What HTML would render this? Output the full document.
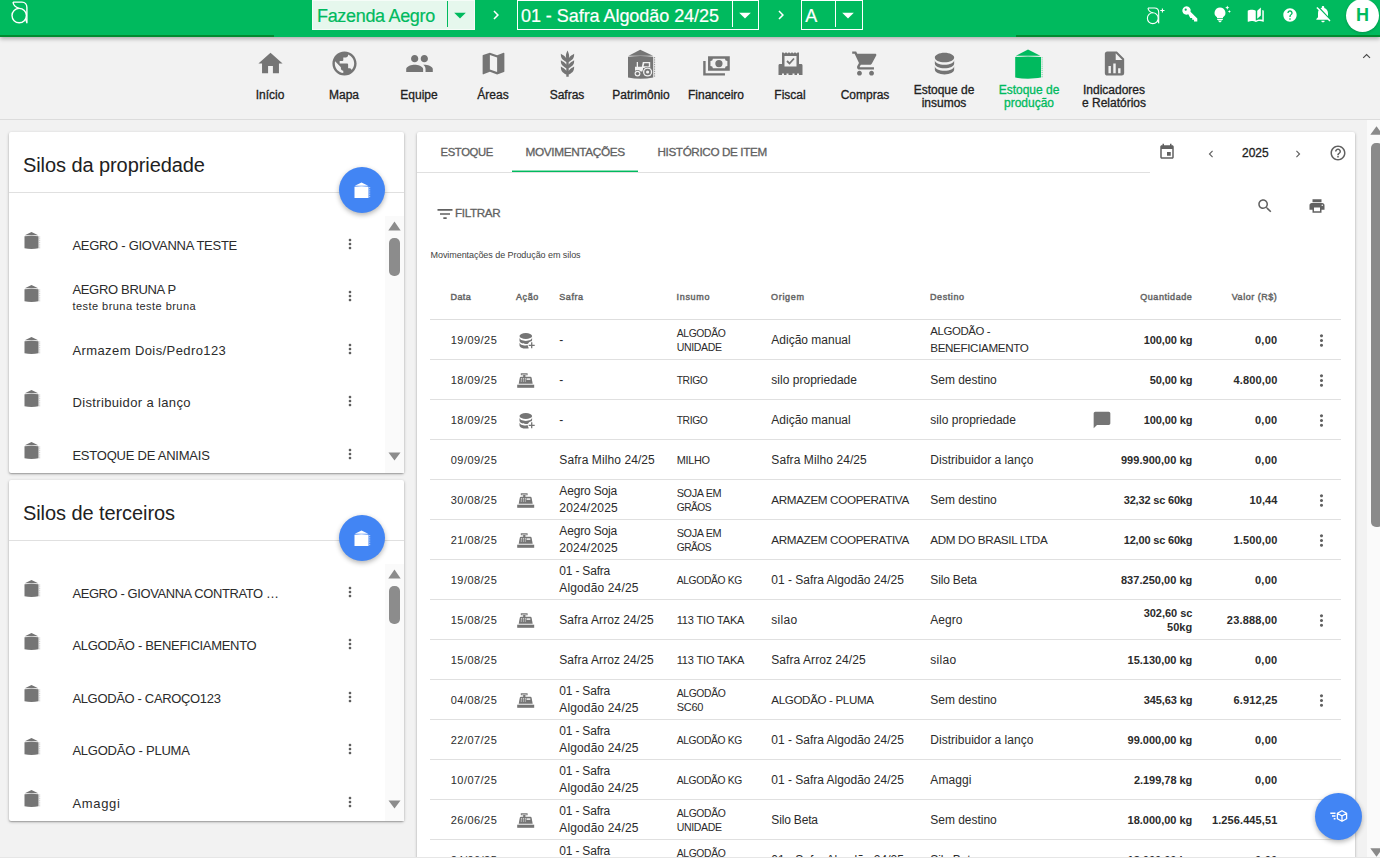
<!DOCTYPE html>
<html lang="pt-BR">
<head>
<meta charset="utf-8">
<title>Aegro - Estoque de produção</title>
<style>
*{box-sizing:border-box}
html,body{margin:0;padding:0}
body{width:1380px;height:858px;overflow:hidden;background:#f2f2f2;font-family:"Liberation Sans",sans-serif;color:#2b2b2b;position:relative}
.ic{position:absolute;display:block;overflow:visible}
.abs{position:absolute}
.t{position:absolute;white-space:nowrap;line-height:1}
.med{-webkit-text-stroke:0.3px currentColor}
.med2{-webkit-text-stroke:0.45px currentColor}
#top{position:absolute;left:0;top:0;width:1380px;height:37px;background:#00ba5e;box-shadow:0 2px 4px rgba(0,0,0,.28);z-index:5}
#prog1,#prog2{position:absolute;top:35px;height:2px;background:#008b30}
#nav{position:absolute;left:0;top:37px;width:1380px;height:83px;background:#f2f2f2;border-bottom:1px solid #dcdcdc}
.nl{position:absolute;font-size:12px;line-height:13px;text-align:center;color:#212121;white-space:nowrap;transform:translateX(-50%);-webkit-text-stroke:0.3px currentColor}
.card{position:absolute;background:#fff;border-radius:2px;box-shadow:0 1px 3px rgba(0,0,0,.3),0 1px 1px rgba(0,0,0,.14)}
.fab{position:absolute;width:46px;height:46px;border-radius:50%;background:#4285f4;box-shadow:0 2px 5px rgba(0,0,0,.3)}
.thumb{position:absolute;background:#8c8c8c;border-radius:5px}
</style>
</head>
<body>
<div id="nav">
<svg class="ic" style="left:255.5px;top:12px;width:29px;height:29px" viewBox="0 0 24 24" ><path fill="#757575" d="M10 20v-6h4v6h5v-8h3L12 3 2 12h3v8z"/></svg>
<div class="nl" style="left:270px;top:52px;color:#212121">Início</div>
<svg class="ic" style="left:329.5px;top:12px;width:29px;height:29px" viewBox="0 0 24 24" ><path fill="#757575" d="M12 2C6.48 2 2 6.48 2 12s4.48 10 10 10 10-4.48 10-10S17.52 2 12 2zm-1 17.93c-3.95-.49-7-3.85-7-7.93 0-.62.08-1.21.21-1.79L9 15v1c0 1.1.9 2 2 2v1.93zm6.9-2.54c-.26-.81-1-1.39-1.9-1.39h-1v-3c0-.55-.45-1-1-1H8v-2h2c.55 0 1-.45 1-1V7h2c1.1 0 2-.9 2-2v-.41c2.93 1.19 5 4.06 5 7.41 0 2.08-.8 3.97-2.1 5.39z"/></svg>
<div class="nl" style="left:344px;top:52px;color:#212121">Mapa</div>
<svg class="ic" style="left:404.5px;top:12px;width:29px;height:29px" viewBox="0 0 24 24" ><path fill="#757575" d="M16 11c1.66 0 2.99-1.34 2.99-3S17.66 5 16 5c-1.66 0-3 1.34-3 3s1.34 3 3 3zm-8 0c1.66 0 2.99-1.34 2.99-3S9.66 5 8 5C6.34 5 5 6.34 5 8s1.34 3 3 3zm0 2c-2.33 0-7 1.17-7 3.5V19h14v-2.5c0-2.33-4.67-3.5-7-3.5zm8 0c-.29 0-.62.02-.97.05 1.16.84 1.97 1.97 1.97 3.45V19h6v-2.5c0-2.33-4.67-3.5-7-3.5z"/></svg>
<div class="nl" style="left:419px;top:52px;color:#212121">Equipe</div>
<svg class="ic" style="left:478.5px;top:12px;width:29px;height:29px" viewBox="0 0 24 24" ><path fill="#757575" d="M20.5 3l-.16.03L15 5.1 9 3 3.36 4.9c-.21.07-.36.25-.36.48V20.5c0 .28.22.5.5.5l.16-.03L9 18.9l6 2.1 5.64-1.9c.21-.07.36-.25.36-.48V3.5c0-.28-.22-.5-.5-.5zM15 19l-6-2.11V5l6 2.11V19z"/></svg>
<div class="nl" style="left:493px;top:52px;color:#212121">Áreas</div>
<svg class="ic" style="left:552.5px;top:12px;width:29px;height:29px" viewBox="0 0 24 24" ><path fill="#757575" d="M7.33,18.33C6.5,17.17 6.5,15.83 6.5,14.5C8.17,15.5 9.83,16.5 10.67,17.67L11,18.23V15.95C9.5,15.05 8.08,14.13 7.33,13.08C6.5,11.92 6.5,10.58 6.5,9.25C8.17,10.25 9.83,11.25 10.67,12.42L11,13V10.7C9.5,9.8 8.08,8.88 7.33,7.83C6.5,6.67 6.5,5.33 6.5,4C8.17,5 9.83,6 10.67,7.17C10.77,7.31 10.86,7.46 10.94,7.62C10.77,7 10.66,6.42 10.65,5.82C10.64,4.31 11.3,2.76 11.96,1.21C12.65,2.69 13.34,4.18 13.35,5.69C13.36,6.32 13.25,6.96 13.07,7.59C13.15,7.45 13.23,7.31 13.33,7.17C14.17,6 15.83,5 17.5,4C17.5,5.33 17.5,6.67 16.67,7.83C15.92,8.88 14.5,9.8 13,10.7V13L13.33,12.42C14.17,11.25 15.83,10.25 17.5,9.25C17.5,10.58 17.5,11.92 16.67,13.08C15.92,14.13 14.5,15.05 13,15.95V18.23L13.33,17.67C14.17,16.5 15.83,15.5 17.5,14.5C17.5,15.83 17.5,17.17 16.67,18.33C15.92,19.38 14.5,20.3 13,21.2V23H11V21.2C9.5,20.3 8.08,19.38 7.33,18.33Z"/></svg>
<div class="nl" style="left:567px;top:52px;color:#212121">Safras</div>
<svg class="ic" style="left:627px;top:12px;width:28px;height:30px" viewBox="0 0 28 30"><path fill="#757575" d="M13.200 0.700 L26 6.700 H1.600Z"/><path fill="#757575" d="M1 7.800 C9 6.800 18 6.800 26.200 7.800 V28.600 C18 30.200 9 30.200 1 28.600Z"/><path fill="none" stroke="#757575" stroke-width="1" stroke-dasharray="1.300 1" stroke-opacity=".75" d="M27.600 8V28.500"/><g fill="#f2f2f2"><path d="M8 17.800H16V22.600H8Z M9.700 13H11V17.800H9.700Z M15.800 13H23.200V19H14.600Z"/><circle cx="20.600" cy="23" r="5.300" fill="#757575"/><circle cx="10.500" cy="24.600" r="3.500" fill="#757575"/><circle cx="20.600" cy="23" r="4.600"/><circle cx="10.500" cy="24.600" r="2.900"/></g><g fill="#757575"><path d="M17.300 14.300H21.800V17.300H16.600Z"/><circle cx="20.600" cy="23" r="3.300"/><circle cx="10.500" cy="24.600" r="1.700"/></g><circle cx="20.600" cy="23" r="1.600" fill="#f2f2f2"/></svg>
<div class="nl" style="left:641px;top:52px;color:#212121">Patrimônio</div>
<svg class="ic" style="left:701.5px;top:12px;width:29px;height:29px" viewBox="0 0 24 24" ><path fill="#757575" d="M5,6H23V18H5V6M14,9A3,3 0 0,1 17,12A3,3 0 0,1 14,15A3,3 0 0,1 11,12A3,3 0 0,1 14,9M9,8A2,2 0 0,1 7,10V14A2,2 0 0,1 9,16H19A2,2 0 0,1 21,14V10A2,2 0 0,1 19,8H9M1,10H3V20H19V22H1V10Z"/></svg>
<div class="nl" style="left:716px;top:52px;color:#212121">Financeiro</div>
<svg class="ic" style="left:777.5px;top:14.5px;width:25px;height:24px" viewBox="0 0 25 24"><path fill="#757575" d="M4 0.500 H5.500 L6.500 1.500 L7.500 0.500 H8.500 L9.500 1.500 L10.500 0.500 H11.500 L12.500 1.500 L13.500 0.500 H14.500 L15.500 1.500 L16.500 0.500 H17.500 L18.500 1.500 L19.500 0.500 H21 V12 H23 C24 12 24.500 12.500 24.500 13.500 V23 H21 V21.500 H19 V23 H16.500 V21.500 H14.500 V23 H10.500 V21.500 H8.500 V23 H6 V21.500 H4 V23 H0.500 V13.500 C0.500 12.500 1 12 2 12 H4Z"/><path fill="#f2f2f2" d="M6.500 4 H18.500 V14.500 H6.500Z"/><path fill="none" stroke="#757575" stroke-width="1.800" d="M9 9 L11.500 11.500 L16 6.500"/></svg>
<div class="nl" style="left:790px;top:52px;color:#212121">Fiscal</div>
<svg class="ic" style="left:850.5px;top:12px;width:29px;height:29px" viewBox="0 0 24 24" ><path fill="#757575" d="M7 18c-1.1 0-1.99.9-1.99 2S5.9 22 7 22s2-.9 2-2-.9-2-2-2zM1 2v2h2l3.6 7.59-1.35 2.45c-.16.28-.25.61-.25.96 0 1.1.9 2 2 2h12v-2H7.42c-.14 0-.25-.11-.25-.25l.03-.12.9-1.63h7.45c.75 0 1.41-.41 1.75-1.03l3.58-6.49c.08-.14.12-.31.12-.48 0-.55-.45-1-1-1H5.21l-.94-2H1zm16 16c-1.1 0-1.99.9-1.99 2s.89 2 1.99 2 2-.9 2-2-.9-2-2-2z"/></svg>
<div class="nl" style="left:865px;top:52px;color:#212121">Compras</div>
<svg class="ic" style="left:929.5px;top:12px;width:29px;height:29px" viewBox="0 0 24 24" ><path fill="#757575" d="M12,3C7.58,3 4,4.79 4,7C4,9.21 7.58,11 12,11C16.42,11 20,9.21 20,7C20,4.79 16.42,3 12,3M4,9V12C4,14.21 7.58,16 12,16C16.42,16 20,14.21 20,12V9C20,11.21 16.42,13 12,13C7.58,13 4,11.21 4,9M4,14V17C4,19.21 7.58,21 12,21C16.42,21 20,19.21 20,17V14C20,16.21 16.42,18 12,18C7.58,18 4,16.21 4,14Z"/></svg>
<div class="nl" style="left:944px;top:47px;color:#212121">Estoque de<br>insumos</div>
<svg class="ic" style="left:1015px;top:12px;width:28px;height:30px" viewBox="0 0 28 30" preserveAspectRatio="none"><path fill="#00ba5e" d="M13 0.600 L25.300 6.700 H0.900Z"/><path fill="#00ba5e" d="M0.200 8 C8 7.200 18 7.200 26 8 V28.600 C18 30 8 30 0.200 28.600Z"/><path fill="none" stroke="#00ba5e" stroke-width="1" stroke-dasharray="1.200 0.900" stroke-opacity=".55" d="M27.100 8.200V28.600"/></svg>
<div class="nl" style="left:1029px;top:47px;color:#00ba5e">Estoque de<br>produção</div>
<svg class="ic" style="left:1099.5px;top:12px;width:29px;height:29px" viewBox="0 0 24 24" ><path fill="#757575" d="M13,9H18.5L13,3.5V9M6,2H14L20,8V20A2,2 0 0,1 18,22H6C4.89,22 4,21.1 4,20V4C4,2.89 4.89,2 6,2M7,20H9V14H7V20M11,20H13V12H11V20M15,20H17V16H15V20Z"/></svg>
<div class="nl" style="left:1114px;top:47px;color:#212121">Indicadores<br>e Relatórios</div>
<svg class="ic" style="left:1360px;top:14px;width:14px;height:10px" viewBox="0 0 14 10"><path fill="none" stroke="#4a4a4a" stroke-width="1.150" d="M3.200 6.900 L6.600 3.500 L10 6.900"/></svg>
</div>
<div class="card" style="left:9px;top:132px;width:395px;height:340.500px"></div>
<div class="t " style="left:23px;top:154.77px;font-size:20px;color:#212121;letter-spacing:-0.08px">Silos da propriedade</div>
<div class="abs" style="left:9px;top:192px;width:395px;height:1px;background:#e0e0e0"></div>
<div class="abs" style="left:385px;top:215.5px;width:19px;height:257px;background:#fafafa"></div>
<svg class="ic" style="left:388px;top:220.5px;width:13px;height:10px" viewBox="0 0 13 10"><path fill="#8c8c8c" d="M6.500 0.500 L12.700 9.500 H0.300Z"/></svg>
<div class="thumb" style="left:389px;top:238px;width:11px;height:38px"></div>
<svg class="ic" style="left:388px;top:452px;width:13px;height:9px" viewBox="0 0 13 9"><path fill="#8c8c8c" d="M0.500 0.500 H12.500 L6.500 8.500Z"/></svg>
<div class="fab" style="left:339px;top:167px"></div>
<svg class="ic" style="left:354px;top:182px;width:17px;height:17px" viewBox="0 0 17 17"><path fill="#fff" d="M7.500 0.500 L14.200 3.800 H0.800Z"/><path fill="#fff" d="M0.500 4.800 C5 4 10 4 14.500 4.800 V16 H0.500Z"/><path fill="none" stroke="#fff" stroke-width="0.800" stroke-dasharray="1 0.800" stroke-opacity=".8" d="M15.700 5V16"/></svg>
<svg class="ic" style="left:23.5px;top:232px;width:17px;height:17px" viewBox="0 0 17 17"><path fill="#757575" d="M7.500 0 L14.200 3.300 H0.800Z"/><path fill="#757575" d="M0.500 4.300 C5 3.500 10 3.500 14.500 4.300 V16.300 C10 17.100 5 17.100 0.500 16.300Z"/><path fill="none" stroke="#757575" stroke-width="0.600" stroke-dasharray="1 0.800" stroke-opacity=".7" d="M15.700 4.500V16.300"/></svg>
<div class="t " style="left:72.4px;top:239.00px;font-size:13.00px;letter-spacing:-0.28px;">AEGRO - GIOVANNA TESTE</div>
<svg class="ic" style="left:341.5px;top:235.9px;width:16px;height:16px" viewBox="0 0 24 24" ><path fill="#5c5c5c" d="M12 8c1.1 0 2-.9 2-2s-.9-2-2-2-2 .9-2 2 .9 2 2 2zm0 2c-1.1 0-2 .9-2 2s.9 2 2 2 2-.9 2-2-.9-2-2-2zm0 6c-1.1 0-2 .9-2 2s.9 2 2 2 2-.9 2-2-.9-2-2-2z"/></svg>
<svg class="ic" style="left:23.5px;top:284.5px;width:17px;height:17px" viewBox="0 0 17 17"><path fill="#757575" d="M7.500 0 L14.200 3.300 H0.800Z"/><path fill="#757575" d="M0.500 4.300 C5 3.500 10 3.500 14.500 4.300 V16.300 C10 17.100 5 17.100 0.500 16.300Z"/><path fill="none" stroke="#757575" stroke-width="0.600" stroke-dasharray="1 0.800" stroke-opacity=".7" d="M15.700 4.500V16.300"/></svg>
<div class="t " style="left:72.4px;top:283.00px;font-size:13.00px;letter-spacing:-0.32px;">AEGRO BRUNA P</div>
<div class="t " style="left:72.4px;top:301.00px;font-size:11.00px;letter-spacing:0.46px;">teste bruna teste bruna</div>
<svg class="ic" style="left:341.5px;top:288.4px;width:16px;height:16px" viewBox="0 0 24 24" ><path fill="#5c5c5c" d="M12 8c1.1 0 2-.9 2-2s-.9-2-2-2-2 .9-2 2 .9 2 2 2zm0 2c-1.1 0-2 .9-2 2s.9 2 2 2 2-.9 2-2-.9-2-2-2zm0 6c-1.1 0-2 .9-2 2s.9 2 2 2 2-.9 2-2-.9-2-2-2z"/></svg>
<svg class="ic" style="left:23.5px;top:337px;width:17px;height:17px" viewBox="0 0 17 17"><path fill="#757575" d="M7.500 0 L14.200 3.300 H0.800Z"/><path fill="#757575" d="M0.500 4.300 C5 3.500 10 3.500 14.500 4.300 V16.300 C10 17.100 5 17.100 0.500 16.300Z"/><path fill="none" stroke="#757575" stroke-width="0.600" stroke-dasharray="1 0.800" stroke-opacity=".7" d="M15.700 4.500V16.300"/></svg>
<div class="t " style="left:72.4px;top:344.00px;font-size:13.00px;letter-spacing:0.41px;">Armazem Dois/Pedro123</div>
<svg class="ic" style="left:341.5px;top:340.9px;width:16px;height:16px" viewBox="0 0 24 24" ><path fill="#5c5c5c" d="M12 8c1.1 0 2-.9 2-2s-.9-2-2-2-2 .9-2 2 .9 2 2 2zm0 2c-1.1 0-2 .9-2 2s.9 2 2 2 2-.9 2-2-.9-2-2-2zm0 6c-1.1 0-2 .9-2 2s.9 2 2 2 2-.9 2-2-.9-2-2-2z"/></svg>
<svg class="ic" style="left:23.5px;top:389.5px;width:17px;height:17px" viewBox="0 0 17 17"><path fill="#757575" d="M7.500 0 L14.200 3.300 H0.800Z"/><path fill="#757575" d="M0.500 4.300 C5 3.500 10 3.500 14.500 4.300 V16.300 C10 17.100 5 17.100 0.500 16.300Z"/><path fill="none" stroke="#757575" stroke-width="0.600" stroke-dasharray="1 0.800" stroke-opacity=".7" d="M15.700 4.500V16.300"/></svg>
<div class="t " style="left:72.4px;top:396.00px;font-size:13.00px;letter-spacing:0.36px;">Distribuidor a lanço</div>
<svg class="ic" style="left:341.5px;top:393.4px;width:16px;height:16px" viewBox="0 0 24 24" ><path fill="#5c5c5c" d="M12 8c1.1 0 2-.9 2-2s-.9-2-2-2-2 .9-2 2 .9 2 2 2zm0 2c-1.1 0-2 .9-2 2s.9 2 2 2 2-.9 2-2-.9-2-2-2zm0 6c-1.1 0-2 .9-2 2s.9 2 2 2 2-.9 2-2-.9-2-2-2z"/></svg>
<svg class="ic" style="left:23.5px;top:442px;width:17px;height:17px" viewBox="0 0 17 17"><path fill="#757575" d="M7.500 0 L14.200 3.300 H0.800Z"/><path fill="#757575" d="M0.500 4.300 C5 3.500 10 3.500 14.500 4.300 V16.300 C10 17.100 5 17.100 0.500 16.300Z"/><path fill="none" stroke="#757575" stroke-width="0.600" stroke-dasharray="1 0.800" stroke-opacity=".7" d="M15.700 4.500V16.300"/></svg>
<div class="t " style="left:72.4px;top:449.00px;font-size:13.00px;letter-spacing:-0.23px;">ESTOQUE DE ANIMAIS</div>
<svg class="ic" style="left:341.5px;top:445.9px;width:16px;height:16px" viewBox="0 0 24 24" ><path fill="#5c5c5c" d="M12 8c1.1 0 2-.9 2-2s-.9-2-2-2-2 .9-2 2 .9 2 2 2zm0 2c-1.1 0-2 .9-2 2s.9 2 2 2 2-.9 2-2-.9-2-2-2zm0 6c-1.1 0-2 .9-2 2s.9 2 2 2 2-.9 2-2-.9-2-2-2z"/></svg>
<div class="card" style="left:9px;top:480px;width:395px;height:340.500px"></div>
<div class="t " style="left:23px;top:502.77px;font-size:20px;color:#212121;letter-spacing:-0.08px">Silos de terceiros</div>
<div class="abs" style="left:9px;top:540px;width:395px;height:1px;background:#e0e0e0"></div>
<div class="abs" style="left:385px;top:563.5px;width:19px;height:257px;background:#fafafa"></div>
<svg class="ic" style="left:388px;top:568.5px;width:13px;height:10px" viewBox="0 0 13 10"><path fill="#8c8c8c" d="M6.500 0.500 L12.700 9.500 H0.300Z"/></svg>
<div class="thumb" style="left:389px;top:586px;width:11px;height:38px"></div>
<svg class="ic" style="left:388px;top:800px;width:13px;height:9px" viewBox="0 0 13 9"><path fill="#8c8c8c" d="M0.500 0.500 H12.500 L6.500 8.500Z"/></svg>
<div class="fab" style="left:339px;top:515px"></div>
<svg class="ic" style="left:354px;top:530px;width:17px;height:17px" viewBox="0 0 17 17"><path fill="#fff" d="M7.500 0.500 L14.200 3.800 H0.800Z"/><path fill="#fff" d="M0.500 4.800 C5 4 10 4 14.500 4.800 V16 H0.500Z"/><path fill="none" stroke="#fff" stroke-width="0.800" stroke-dasharray="1 0.800" stroke-opacity=".8" d="M15.700 5V16"/></svg>
<svg class="ic" style="left:23.5px;top:580px;width:17px;height:17px" viewBox="0 0 17 17"><path fill="#757575" d="M7.500 0 L14.200 3.300 H0.800Z"/><path fill="#757575" d="M0.500 4.300 C5 3.500 10 3.500 14.500 4.300 V16.300 C10 17.100 5 17.100 0.500 16.300Z"/><path fill="none" stroke="#757575" stroke-width="0.600" stroke-dasharray="1 0.800" stroke-opacity=".7" d="M15.700 4.500V16.300"/></svg>
<div class="t " style="left:72.4px;top:588.00px;font-size:12.94px;letter-spacing:-0.38px;">AEGRO - GIOVANNA CONTRATO …</div>
<svg class="ic" style="left:341.5px;top:583.9px;width:16px;height:16px" viewBox="0 0 24 24" ><path fill="#5c5c5c" d="M12 8c1.1 0 2-.9 2-2s-.9-2-2-2-2 .9-2 2 .9 2 2 2zm0 2c-1.1 0-2 .9-2 2s.9 2 2 2 2-.9 2-2-.9-2-2-2zm0 6c-1.1 0-2 .9-2 2s.9 2 2 2 2-.9 2-2-.9-2-2-2z"/></svg>
<svg class="ic" style="left:23.5px;top:632.5px;width:17px;height:17px" viewBox="0 0 17 17"><path fill="#757575" d="M7.500 0 L14.200 3.300 H0.800Z"/><path fill="#757575" d="M0.500 4.300 C5 3.500 10 3.500 14.500 4.300 V16.300 C10 17.100 5 17.100 0.500 16.300Z"/><path fill="none" stroke="#757575" stroke-width="0.600" stroke-dasharray="1 0.800" stroke-opacity=".7" d="M15.700 4.500V16.300"/></svg>
<div class="t " style="left:72.4px;top:639.00px;font-size:13.00px;letter-spacing:-0.30px;">ALGODÃO - BENEFICIAMENTO</div>
<svg class="ic" style="left:341.5px;top:636.4px;width:16px;height:16px" viewBox="0 0 24 24" ><path fill="#5c5c5c" d="M12 8c1.1 0 2-.9 2-2s-.9-2-2-2-2 .9-2 2 .9 2 2 2zm0 2c-1.1 0-2 .9-2 2s.9 2 2 2 2-.9 2-2-.9-2-2-2zm0 6c-1.1 0-2 .9-2 2s.9 2 2 2 2-.9 2-2-.9-2-2-2z"/></svg>
<svg class="ic" style="left:23.5px;top:685px;width:17px;height:17px" viewBox="0 0 17 17"><path fill="#757575" d="M7.500 0 L14.200 3.300 H0.800Z"/><path fill="#757575" d="M0.500 4.300 C5 3.500 10 3.500 14.500 4.300 V16.300 C10 17.100 5 17.100 0.500 16.300Z"/><path fill="none" stroke="#757575" stroke-width="0.600" stroke-dasharray="1 0.800" stroke-opacity=".7" d="M15.700 4.500V16.300"/></svg>
<div class="t " style="left:72.4px;top:692.00px;font-size:13.00px;letter-spacing:-0.34px;">ALGODÃO - CAROÇO123</div>
<svg class="ic" style="left:341.5px;top:688.9px;width:16px;height:16px" viewBox="0 0 24 24" ><path fill="#5c5c5c" d="M12 8c1.1 0 2-.9 2-2s-.9-2-2-2-2 .9-2 2 .9 2 2 2zm0 2c-1.1 0-2 .9-2 2s.9 2 2 2 2-.9 2-2-.9-2-2-2zm0 6c-1.1 0-2 .9-2 2s.9 2 2 2 2-.9 2-2-.9-2-2-2z"/></svg>
<svg class="ic" style="left:23.5px;top:737.5px;width:17px;height:17px" viewBox="0 0 17 17"><path fill="#757575" d="M7.500 0 L14.200 3.300 H0.800Z"/><path fill="#757575" d="M0.500 4.300 C5 3.500 10 3.500 14.500 4.300 V16.300 C10 17.100 5 17.100 0.500 16.300Z"/><path fill="none" stroke="#757575" stroke-width="0.600" stroke-dasharray="1 0.800" stroke-opacity=".7" d="M15.700 4.500V16.300"/></svg>
<div class="t " style="left:72.4px;top:744.00px;font-size:13.00px;letter-spacing:-0.23px;">ALGODÃO - PLUMA</div>
<svg class="ic" style="left:341.5px;top:741.4px;width:16px;height:16px" viewBox="0 0 24 24" ><path fill="#5c5c5c" d="M12 8c1.1 0 2-.9 2-2s-.9-2-2-2-2 .9-2 2 .9 2 2 2zm0 2c-1.1 0-2 .9-2 2s.9 2 2 2 2-.9 2-2-.9-2-2-2zm0 6c-1.1 0-2 .9-2 2s.9 2 2 2 2-.9 2-2-.9-2-2-2z"/></svg>
<svg class="ic" style="left:23.5px;top:790px;width:17px;height:17px" viewBox="0 0 17 17"><path fill="#757575" d="M7.500 0 L14.200 3.300 H0.800Z"/><path fill="#757575" d="M0.500 4.300 C5 3.500 10 3.500 14.500 4.300 V16.300 C10 17.100 5 17.100 0.500 16.300Z"/><path fill="none" stroke="#757575" stroke-width="0.600" stroke-dasharray="1 0.800" stroke-opacity=".7" d="M15.700 4.500V16.300"/></svg>
<div class="t " style="left:72.4px;top:797.00px;font-size:13.00px;letter-spacing:0.68px;">Amaggi</div>
<svg class="ic" style="left:341.5px;top:793.9px;width:16px;height:16px" viewBox="0 0 24 24" ><path fill="#5c5c5c" d="M12 8c1.1 0 2-.9 2-2s-.9-2-2-2-2 .9-2 2 .9 2 2 2zm0 2c-1.1 0-2 .9-2 2s.9 2 2 2 2-.9 2-2-.9-2-2-2zm0 6c-1.1 0-2 .9-2 2s.9 2 2 2 2-.9 2-2-.9-2-2-2z"/></svg>
<div class="card" style="left:417px;top:132px;width:938px;height:740px"></div>
<div class="t med" style="left:440.5px;top:147.00px;font-size:11.28px;letter-spacing:-0.36px;color:#616161">ESTOQUE</div>
<div class="t med" style="left:525.5px;top:147.00px;font-size:11.82px;letter-spacing:-0.37px;color:#616161">MOVIMENTAÇÕES</div>
<div class="t med" style="left:657.5px;top:146.00px;font-size:11.70px;letter-spacing:-0.37px;color:#616161">HISTÓRICO DE ITEM</div>
<div class="abs" style="left:417px;top:172px;width:733px;height:1px;background:#e0e0e0"></div>
<div class="abs" style="left:512px;top:170px;width:126px;height:1px;background:#00ba5e;opacity:.45"></div>
<div class="abs" style="left:512px;top:171px;width:126px;height:1px;background:#00ba5e"></div>
<svg class="ic" style="left:1158px;top:143.3px;width:18px;height:18px" viewBox="0 0 24 24" ><path fill="#616161" d="M17 12h-5v5h5v-5zM16 1v2H8V1H6v2H5c-1.11 0-1.99.9-1.99 2L3 19c0 1.1.89 2 2 2h14c1.1 0 2-.9 2-2V5c0-1.1-.9-2-2-2h-1V1h-2zm3 18H5V8h14v11z"/></svg>
<svg class="ic" style="left:1204px;top:146.5px;width:14px;height:14px" viewBox="0 0 24 24" ><path fill="#616161" d="M15.41 7.41L14 6l-6 6 6 6 1.41-1.41L10.83 12z"/></svg>
<div class="t med" style="left:1242px;top:147.14px;font-size:12px;color:#212121">2025</div>
<svg class="ic" style="left:1291px;top:146.5px;width:14px;height:14px" viewBox="0 0 24 24" ><path fill="#616161" d="M10 6L8.59 7.41 13.17 12l-4.58 4.59L10 18l6-6z"/></svg>
<svg class="ic" style="left:1328.8px;top:144px;width:18px;height:18px" viewBox="0 0 24 24" ><path fill="#616161" d="M11 18h2v-2h-2v2zm1-16C6.48 2 2 6.48 2 12s4.48 10 10 10 10-4.48 10-10S17.52 2 12 2zm0 18c-4.41 0-8-3.59-8-8s3.590-8 8-8 8 3.590 8 8-3.590 8-8 8zm0-14c-2.210 0-4 1.790-4 4h2c0-1.1.9-2 2-2s2 .9 2 2c0 2-3 1.750-3 5h2c0-2.250 3-2.500 3-5 0-2.210-1.790-4-4-4z"/></svg>
<svg class="ic" style="left:434.5px;top:204.2px;width:20px;height:20px" viewBox="0 0 24 24" ><path fill="#616161" d="M10 18h4v-2h-4v2zM3 6v2h18V6H3zm3 7h12v-2H6v2z"/></svg>
<div class="t med" style="left:455px;top:207.00px;font-size:11.70px;letter-spacing:-0.36px;color:#616161">FILTRAR</div>
<svg class="ic" style="left:1255.6px;top:197.3px;width:18px;height:18px" viewBox="0 0 24 24" ><path fill="#616161" d="M15.5 14h-.79l-.28-.27C15.41 12.59 16 11.11 16 9.5 16 5.91 13.09 3 9.5 3S3 5.91 3 9.5 5.91 16 9.5 16c1.61 0 3.09-.59 4.23-1.57l.27.28v.79l5 4.99L20.49 19l-4.99-5zm-6 0C7.01 14 5 11.99 5 9.5S7.01 5 9.5 5 14 7.01 14 9.5 11.99 14 9.5 14z"/></svg>
<svg class="ic" style="left:1307.5px;top:197.3px;width:18px;height:18px" viewBox="0 0 24 24" ><path fill="#616161" d="M19 8H5c-1.66 0-3 1.34-3 3v6h4v4h12v-4h4v-6c0-1.66-1.34-3-3-3zm-3 11H8v-5h8v5zm3-7c-.55 0-1-.45-1-1s.45-1 1-1 1 .45 1 1-.45 1-1 1zm-1-9H6v4h12V3z"/></svg>
<div class="t " style="left:430.5px;top:251.38px;font-size:9px;color:#424242;letter-spacing:-0.06px">Movimentações de Produção em silos</div>
<div class="t med2" style="left:450.5px;top:293.00px;font-size:9.00px;letter-spacing:0.43px;color:#666;">Data</div>
<div class="t med2" style="left:516px;top:293.00px;font-size:9.00px;letter-spacing:0.60px;color:#666;">Ação</div>
<div class="t med2" style="left:559.3px;top:293.00px;font-size:9.00px;letter-spacing:0.57px;color:#666;">Safra</div>
<div class="t med2" style="left:676.5px;top:293.00px;font-size:9.00px;letter-spacing:0.70px;color:#666;">Insumo</div>
<div class="t med2" style="left:771px;top:293.00px;font-size:9.00px;letter-spacing:0.70px;color:#666;">Origem</div>
<div class="t med2" style="left:930px;top:293.00px;font-size:9.00px;letter-spacing:0.58px;color:#666;">Destino</div>
<div class="t med2" style="right:187.7px;top:293.00px;font-size:9.00px;letter-spacing:0.55px;color:#666;">Quantidade</div>
<div class="t med2" style="right:102.6px;top:293.00px;font-size:9.00px;letter-spacing:0.53px;color:#666;">Valor (R$)</div>
<div class="abs" style="left:430px;top:319px;width:911px;height:1px;background:#dedede"></div>
<div class="abs" style="left:430px;top:359px;width:911px;height:1px;background:#e0e0e0"></div>
<div class="t " style="left:450.8px;top:335.00px;font-size:11.00px;letter-spacing:0.45px;">19/09/25</div>
<svg class="ic" style="left:518.5px;top:332px;width:17px;height:17px" viewBox="0 0 17 17"><ellipse cx="6.800" cy="4" rx="6.300" ry="3" fill="#757575"/><path fill="#757575" d="M0.500 5.600 C0.500 7.600 3.300 8.900 6.800 8.900 C10.300 8.900 13.100 7.600 13.100 5.600 V7.900 C13.100 8.400 12.900 8.800 12.500 9.200 C11 9.300 9.600 10.300 9.100 11.800 C8.400 11.900 7.600 12 6.800 12 C3.300 12 0.500 10.600 0.500 8.600Z"/><path fill="#757575" d="M0.500 10.200 C0.500 12.200 3.300 13.500 6.800 13.500 C7.500 13.500 8.200 13.450 8.800 13.350 C8.800 14.500 9.200 15.500 9.900 16.200 C9 16.500 7.900 16.600 6.800 16.600 C3.300 16.600 0.500 15.200 0.500 13.200Z"/><path fill="none" stroke="#757575" stroke-width="1.300" d="M9.700 13.300H15.700M12.700 10.300V16.300"/></svg>
<div class="t " style="left:559.3px;top:333.84px;font-size:12px;">-</div>
<div class="t " style="left:676.7px;top:329.00px;font-size:10.39px;letter-spacing:-0.36px;">ALGODÃO</div>
<div class="t " style="left:676.7px;top:342.00px;font-size:10.56px;letter-spacing:-0.36px;">UNIDADE</div>
<div class="t " style="left:771.3px;top:334.00px;font-size:12.00px;letter-spacing:-0.00px;">Adição manual</div>
<div class="t " style="left:930.3px;top:326.00px;font-size:11.40px;letter-spacing:-0.37px;">ALGODÃO -</div>
<div class="t " style="left:930.3px;top:342.00px;font-size:11.64px;letter-spacing:-0.36px;">BENEFICIAMENTO</div>
<div class="t " style="right:187.7px;top:335.00px;font-size:11.00px;letter-spacing:-0.11px;font-weight:700;">100,00 kg</div>
<div class="t " style="right:102.6px;top:335.00px;font-size:11.00px;letter-spacing:0.26px;font-weight:700;">0,00</div>
<svg class="ic" style="left:1311.5px;top:330.5px;width:19px;height:19px" viewBox="0 0 24 24" ><path fill="#616161" d="M12 8c1.1 0 2-.9 2-2s-.9-2-2-2-2 .9-2 2 .9 2 2 2zm0 2c-1.1 0-2 .9-2 2s.9 2 2 2 2-.9 2-2-.9-2-2-2zm0 6c-1.1 0-2 .9-2 2s.9 2 2 2 2-.9 2-2-.9-2-2-2z"/></svg>
<div class="abs" style="left:430px;top:399px;width:911px;height:1px;background:#e0e0e0"></div>
<div class="t " style="left:450.8px;top:375.00px;font-size:11.00px;letter-spacing:0.45px;">18/09/25</div>
<svg class="ic" style="left:517px;top:373px;width:17.400px;height:15px" viewBox="0 0 17.400 15"><path fill="#757575" d="M3.800 0.200 H10.600 V2.300 H8.400 V3.800 H13.400 C14.100 3.800 14.500 4.200 14.600 4.800 L15.700 10.700 H1.700 L2.800 4.800 C2.900 4.200 3.300 3.800 4 3.800 H6.200 V2.300 H3.800Z"/><path fill="#757575" d="M0.200 11.700 H17.200 V14.800 H0.200Z"/><path fill="#fff" d="M9.600 5.200 H13.300 V6.900 H9.600Z M3.900 5.200 H5.100 V6.400 H3.900Z M5.900 5.200 H7.100 V6.400 H5.900Z M7.900 5.200 H8.900 V6.400 H7.900Z M3.700 7.400 H4.900 V8.600 H3.700Z M5.900 7.400 H7.100 V8.600 H5.900Z M7.900 7.400 H8.900 V8.600 H7.900Z M4.700 0.900 H9.700 V1.600 H4.700Z" opacity=".8"/></svg>
<div class="t " style="left:559.3px;top:373.84px;font-size:12px;">-</div>
<div class="t " style="left:676.7px;top:376.00px;font-size:10.34px;letter-spacing:-0.38px;">TRIGO</div>
<div class="t " style="left:771.3px;top:374.00px;font-size:12.00px;letter-spacing:0.02px;">silo propriedade</div>
<div class="t " style="left:930.3px;top:374.00px;font-size:12.00px;letter-spacing:-0.03px;">Sem destino</div>
<div class="t " style="right:187.7px;top:375.00px;font-size:11.00px;letter-spacing:-0.10px;font-weight:700;">50,00 kg</div>
<div class="t " style="right:102.6px;top:375.00px;font-size:11.00px;letter-spacing:0.14px;font-weight:700;">4.800,00</div>
<svg class="ic" style="left:1311.5px;top:370.5px;width:19px;height:19px" viewBox="0 0 24 24" ><path fill="#616161" d="M12 8c1.1 0 2-.9 2-2s-.9-2-2-2-2 .9-2 2 .9 2 2 2zm0 2c-1.1 0-2 .9-2 2s.9 2 2 2 2-.9 2-2-.9-2-2-2zm0 6c-1.1 0-2 .9-2 2s.9 2 2 2 2-.9 2-2-.9-2-2-2z"/></svg>
<div class="abs" style="left:430px;top:439px;width:911px;height:1px;background:#e0e0e0"></div>
<div class="t " style="left:450.8px;top:415.00px;font-size:11.00px;letter-spacing:0.45px;">18/09/25</div>
<svg class="ic" style="left:518.5px;top:412px;width:17px;height:17px" viewBox="0 0 17 17"><ellipse cx="6.800" cy="4" rx="6.300" ry="3" fill="#757575"/><path fill="#757575" d="M0.500 5.600 C0.500 7.600 3.300 8.900 6.800 8.900 C10.300 8.900 13.100 7.600 13.100 5.600 V7.900 C13.100 8.400 12.900 8.800 12.500 9.200 C11 9.300 9.600 10.300 9.100 11.800 C8.400 11.900 7.600 12 6.800 12 C3.300 12 0.500 10.600 0.500 8.600Z"/><path fill="#757575" d="M0.500 10.200 C0.500 12.200 3.300 13.500 6.800 13.500 C7.500 13.500 8.200 13.450 8.800 13.350 C8.800 14.500 9.200 15.500 9.900 16.200 C9 16.500 7.900 16.600 6.800 16.600 C3.300 16.600 0.500 15.200 0.500 13.200Z"/><path fill="none" stroke="#757575" stroke-width="1.300" d="M9.700 13.300H15.700M12.700 10.300V16.300"/></svg>
<div class="t " style="left:559.3px;top:413.84px;font-size:12px;">-</div>
<div class="t " style="left:676.7px;top:416.00px;font-size:10.34px;letter-spacing:-0.38px;">TRIGO</div>
<div class="t " style="left:771.3px;top:414.00px;font-size:12.00px;letter-spacing:-0.00px;">Adição manual</div>
<div class="t " style="left:930.3px;top:414.00px;font-size:12.00px;letter-spacing:0.02px;">silo propriedade</div>
<div class="t " style="right:187.7px;top:415.00px;font-size:11.00px;letter-spacing:-0.11px;font-weight:700;">100,00 kg</div>
<div class="t " style="right:102.6px;top:415.00px;font-size:11.00px;letter-spacing:0.26px;font-weight:700;">0,00</div>
<svg class="ic" style="left:1311.5px;top:410.5px;width:19px;height:19px" viewBox="0 0 24 24" ><path fill="#616161" d="M12 8c1.1 0 2-.9 2-2s-.9-2-2-2-2 .9-2 2 .9 2 2 2zm0 2c-1.1 0-2 .9-2 2s.9 2 2 2 2-.9 2-2-.9-2-2-2zm0 6c-1.1 0-2 .9-2 2s.9 2 2 2 2-.9 2-2-.9-2-2-2z"/></svg>
<svg class="ic" style="left:1092px;top:410.2px;width:20px;height:20px" viewBox="0 0 24 24" ><path fill="#757575" d="M20 2H4c-1.1 0-2 .9-2 2v18l4-4h14c1.1 0 2-.9 2-2V4c0-1.1-.9-2-2-2z"/></svg>
<div class="abs" style="left:430px;top:479px;width:911px;height:1px;background:#e0e0e0"></div>
<div class="t " style="left:450.8px;top:455.00px;font-size:11.00px;letter-spacing:0.45px;">09/09/25</div>
<div class="t " style="left:559.3px;top:454.00px;font-size:12.00px;letter-spacing:0.09px;">Safra Milho 24/25</div>
<div class="t " style="left:676.7px;top:455.00px;font-size:10.95px;letter-spacing:-0.34px;">MILHO</div>
<div class="t " style="left:771.3px;top:454.00px;font-size:12.00px;letter-spacing:0.09px;">Safra Milho 24/25</div>
<div class="t " style="left:930.3px;top:454.00px;font-size:12.00px;letter-spacing:0.02px;">Distribuidor a lanço</div>
<div class="t " style="right:187.7px;top:455.00px;font-size:11.00px;letter-spacing:0.03px;font-weight:700;">999.900,00 kg</div>
<div class="t " style="right:102.6px;top:455.00px;font-size:11.00px;letter-spacing:0.26px;font-weight:700;">0,00</div>
<div class="abs" style="left:430px;top:519px;width:911px;height:1px;background:#e0e0e0"></div>
<div class="t " style="left:450.8px;top:495.00px;font-size:11.00px;letter-spacing:0.45px;">30/08/25</div>
<svg class="ic" style="left:517px;top:493px;width:17.400px;height:15px" viewBox="0 0 17.400 15"><path fill="#757575" d="M3.800 0.200 H10.600 V2.300 H8.400 V3.800 H13.400 C14.100 3.800 14.500 4.200 14.600 4.800 L15.700 10.700 H1.700 L2.800 4.800 C2.900 4.200 3.300 3.800 4 3.800 H6.200 V2.300 H3.800Z"/><path fill="#757575" d="M0.200 11.700 H17.200 V14.800 H0.200Z"/><path fill="#fff" d="M9.600 5.200 H13.300 V6.900 H9.600Z M3.900 5.200 H5.100 V6.400 H3.900Z M5.900 5.200 H7.100 V6.400 H5.900Z M7.900 5.200 H8.900 V6.400 H7.900Z M3.700 7.400 H4.900 V8.600 H3.700Z M5.900 7.400 H7.100 V8.600 H5.900Z M7.900 7.400 H8.900 V8.600 H7.900Z M4.700 0.900 H9.700 V1.600 H4.700Z" opacity=".8"/></svg>
<div class="t " style="left:559.3px;top:485.00px;font-size:12.00px;letter-spacing:-0.17px;">Aegro Soja</div>
<div class="t " style="left:559.3px;top:502.00px;font-size:12.00px;letter-spacing:0.22px;">2024/2025</div>
<div class="t " style="left:676.7px;top:488.00px;font-size:10.89px;letter-spacing:-0.37px;">SOJA EM</div>
<div class="t " style="left:676.7px;top:503.00px;font-size:10.23px;letter-spacing:-0.51px;">GRÃOS</div>
<div class="t " style="left:771.3px;top:494.00px;font-size:11.70px;letter-spacing:-0.36px;">ARMAZEM COOPERATIVA</div>
<div class="t " style="left:930.3px;top:494.00px;font-size:12.00px;letter-spacing:-0.03px;">Sem destino</div>
<div class="t " style="right:187.7px;top:495.00px;font-size:11.00px;letter-spacing:-0.18px;font-weight:700;">32,32 sc 60kg</div>
<div class="t " style="right:102.6px;top:495.00px;font-size:11.00px;letter-spacing:0.07px;font-weight:700;">10,44</div>
<svg class="ic" style="left:1311.5px;top:490.5px;width:19px;height:19px" viewBox="0 0 24 24" ><path fill="#616161" d="M12 8c1.1 0 2-.9 2-2s-.9-2-2-2-2 .9-2 2 .9 2 2 2zm0 2c-1.1 0-2 .9-2 2s.9 2 2 2 2-.9 2-2-.9-2-2-2zm0 6c-1.1 0-2 .9-2 2s.9 2 2 2 2-.9 2-2-.9-2-2-2z"/></svg>
<div class="abs" style="left:430px;top:559px;width:911px;height:1px;background:#e0e0e0"></div>
<div class="t " style="left:450.8px;top:535.00px;font-size:11.00px;letter-spacing:0.45px;">21/08/25</div>
<svg class="ic" style="left:517px;top:533px;width:17.400px;height:15px" viewBox="0 0 17.400 15"><path fill="#757575" d="M3.800 0.200 H10.600 V2.300 H8.400 V3.800 H13.400 C14.100 3.800 14.500 4.200 14.600 4.800 L15.700 10.700 H1.700 L2.800 4.800 C2.900 4.200 3.300 3.800 4 3.800 H6.200 V2.300 H3.800Z"/><path fill="#757575" d="M0.200 11.700 H17.200 V14.800 H0.200Z"/><path fill="#fff" d="M9.600 5.200 H13.300 V6.900 H9.600Z M3.900 5.200 H5.100 V6.400 H3.900Z M5.900 5.200 H7.100 V6.400 H5.900Z M7.900 5.200 H8.900 V6.400 H7.900Z M3.700 7.400 H4.900 V8.600 H3.700Z M5.900 7.400 H7.100 V8.600 H5.900Z M7.900 7.400 H8.900 V8.600 H7.900Z M4.700 0.900 H9.700 V1.600 H4.700Z" opacity=".8"/></svg>
<div class="t " style="left:559.3px;top:525.00px;font-size:12.00px;letter-spacing:-0.17px;">Aegro Soja</div>
<div class="t " style="left:559.3px;top:542.00px;font-size:12.00px;letter-spacing:0.22px;">2024/2025</div>
<div class="t " style="left:676.7px;top:528.00px;font-size:10.89px;letter-spacing:-0.37px;">SOJA EM</div>
<div class="t " style="left:676.7px;top:543.00px;font-size:10.23px;letter-spacing:-0.51px;">GRÃOS</div>
<div class="t " style="left:771.3px;top:534.00px;font-size:11.70px;letter-spacing:-0.36px;">ARMAZEM COOPERATIVA</div>
<div class="t " style="left:930.3px;top:534.00px;font-size:11.70px;letter-spacing:-0.35px;">ADM DO BRASIL LTDA</div>
<div class="t " style="right:187.7px;top:535.00px;font-size:11.00px;letter-spacing:-0.18px;font-weight:700;">12,00 sc 60kg</div>
<div class="t " style="right:102.6px;top:535.00px;font-size:11.00px;letter-spacing:0.14px;font-weight:700;">1.500,00</div>
<svg class="ic" style="left:1311.5px;top:530.5px;width:19px;height:19px" viewBox="0 0 24 24" ><path fill="#616161" d="M12 8c1.1 0 2-.9 2-2s-.9-2-2-2-2 .9-2 2 .9 2 2 2zm0 2c-1.1 0-2 .9-2 2s.9 2 2 2 2-.9 2-2-.9-2-2-2zm0 6c-1.1 0-2 .9-2 2s.9 2 2 2 2-.9 2-2-.9-2-2-2z"/></svg>
<div class="abs" style="left:430px;top:599px;width:911px;height:1px;background:#e0e0e0"></div>
<div class="t " style="left:450.8px;top:575.00px;font-size:11.00px;letter-spacing:0.45px;">19/08/25</div>
<div class="t " style="left:559.3px;top:565.00px;font-size:12.00px;letter-spacing:-0.19px;">01 - Safra</div>
<div class="t " style="left:559.3px;top:582.00px;font-size:12.00px;letter-spacing:0.14px;">Algodão 24/25</div>
<div class="t " style="left:676.7px;top:576.00px;font-size:10.29px;letter-spacing:-0.34px;">ALGODÃO KG</div>
<div class="t " style="left:771.3px;top:574.00px;font-size:12.00px;letter-spacing:-0.01px;">01 - Safra Algodão 24/25</div>
<div class="t " style="left:930.3px;top:574.00px;font-size:12.00px;letter-spacing:-0.16px;">Silo Beta</div>
<div class="t " style="right:187.7px;top:575.00px;font-size:11.00px;letter-spacing:0.03px;font-weight:700;">837.250,00 kg</div>
<div class="t " style="right:102.6px;top:575.00px;font-size:11.00px;letter-spacing:0.26px;font-weight:700;">0,00</div>
<div class="abs" style="left:430px;top:639px;width:911px;height:1px;background:#e0e0e0"></div>
<div class="t " style="left:450.8px;top:615.00px;font-size:11.00px;letter-spacing:0.45px;">15/08/25</div>
<svg class="ic" style="left:517px;top:613px;width:17.400px;height:15px" viewBox="0 0 17.400 15"><path fill="#757575" d="M3.800 0.200 H10.600 V2.300 H8.400 V3.800 H13.400 C14.100 3.800 14.500 4.200 14.600 4.800 L15.700 10.700 H1.700 L2.800 4.800 C2.900 4.200 3.300 3.800 4 3.800 H6.200 V2.300 H3.800Z"/><path fill="#757575" d="M0.200 11.700 H17.200 V14.800 H0.200Z"/><path fill="#fff" d="M9.600 5.200 H13.300 V6.900 H9.600Z M3.900 5.200 H5.100 V6.400 H3.900Z M5.900 5.200 H7.100 V6.400 H5.900Z M7.900 5.200 H8.900 V6.400 H7.900Z M3.700 7.400 H4.900 V8.600 H3.700Z M5.900 7.400 H7.100 V8.600 H5.900Z M7.900 7.400 H8.900 V8.600 H7.900Z M4.700 0.900 H9.700 V1.600 H4.700Z" opacity=".8"/></svg>
<div class="t " style="left:559.3px;top:614.00px;font-size:12.00px;letter-spacing:0.06px;">Safra Arroz 24/25</div>
<div class="t " style="left:676.7px;top:615.00px;font-size:11.00px;letter-spacing:-0.16px;">113 TIO TAKA</div>
<div class="t " style="left:771.3px;top:614.00px;font-size:12.00px;letter-spacing:0.27px;">silao</div>
<div class="t " style="left:930.3px;top:614.00px;font-size:12.00px;letter-spacing:0.01px;">Aegro</div>
<div class="t " style="right:187.7px;top:608.00px;font-size:11.00px;letter-spacing:-0.03px;font-weight:700;">302,60 sc</div>
<div class="t " style="right:187.7px;top:622.00px;font-size:11.00px;letter-spacing:0.07px;font-weight:700;">50kg</div>
<div class="t " style="right:102.6px;top:615.00px;font-size:11.00px;letter-spacing:0.18px;font-weight:700;">23.888,00</div>
<svg class="ic" style="left:1311.5px;top:610.5px;width:19px;height:19px" viewBox="0 0 24 24" ><path fill="#616161" d="M12 8c1.1 0 2-.9 2-2s-.9-2-2-2-2 .9-2 2 .9 2 2 2zm0 2c-1.1 0-2 .9-2 2s.9 2 2 2 2-.9 2-2-.9-2-2-2zm0 6c-1.1 0-2 .9-2 2s.9 2 2 2 2-.9 2-2-.9-2-2-2z"/></svg>
<div class="abs" style="left:430px;top:679px;width:911px;height:1px;background:#e0e0e0"></div>
<div class="t " style="left:450.8px;top:655.00px;font-size:11.00px;letter-spacing:0.45px;">15/08/25</div>
<div class="t " style="left:559.3px;top:654.00px;font-size:12.00px;letter-spacing:0.06px;">Safra Arroz 24/25</div>
<div class="t " style="left:676.7px;top:655.00px;font-size:11.00px;letter-spacing:-0.16px;">113 TIO TAKA</div>
<div class="t " style="left:771.3px;top:654.00px;font-size:12.00px;letter-spacing:0.06px;">Safra Arroz 24/25</div>
<div class="t " style="left:930.3px;top:654.00px;font-size:12.00px;letter-spacing:0.27px;">silao</div>
<div class="t " style="right:187.7px;top:655.00px;font-size:11.00px;letter-spacing:-0.01px;font-weight:700;">15.130,00 kg</div>
<div class="t " style="right:102.6px;top:655.00px;font-size:11.00px;letter-spacing:0.26px;font-weight:700;">0,00</div>
<div class="abs" style="left:430px;top:719px;width:911px;height:1px;background:#e0e0e0"></div>
<div class="t " style="left:450.8px;top:695.00px;font-size:11.00px;letter-spacing:0.45px;">04/08/25</div>
<svg class="ic" style="left:517px;top:693px;width:17.400px;height:15px" viewBox="0 0 17.400 15"><path fill="#757575" d="M3.800 0.200 H10.600 V2.300 H8.400 V3.800 H13.400 C14.100 3.800 14.500 4.200 14.600 4.800 L15.700 10.700 H1.700 L2.800 4.800 C2.900 4.200 3.300 3.800 4 3.800 H6.200 V2.300 H3.800Z"/><path fill="#757575" d="M0.200 11.700 H17.200 V14.800 H0.200Z"/><path fill="#fff" d="M9.600 5.200 H13.300 V6.900 H9.600Z M3.900 5.200 H5.100 V6.400 H3.900Z M5.900 5.200 H7.100 V6.400 H5.900Z M7.900 5.200 H8.900 V6.400 H7.900Z M3.700 7.400 H4.900 V8.600 H3.700Z M5.900 7.400 H7.100 V8.600 H5.900Z M7.900 7.400 H8.900 V8.600 H7.900Z M4.700 0.900 H9.700 V1.600 H4.700Z" opacity=".8"/></svg>
<div class="t " style="left:559.3px;top:685.00px;font-size:12.00px;letter-spacing:-0.19px;">01 - Safra</div>
<div class="t " style="left:559.3px;top:702.00px;font-size:12.00px;letter-spacing:0.14px;">Algodão 24/25</div>
<div class="t " style="left:676.7px;top:689.00px;font-size:10.39px;letter-spacing:-0.36px;">ALGODÃO</div>
<div class="t " style="left:676.7px;top:702.00px;font-size:11.00px;letter-spacing:-0.28px;">SC60</div>
<div class="t " style="left:771.3px;top:695.00px;font-size:11.58px;letter-spacing:-0.34px;">ALGODÃO - PLUMA</div>
<div class="t " style="left:930.3px;top:694.00px;font-size:12.00px;letter-spacing:-0.03px;">Sem destino</div>
<div class="t " style="right:187.7px;top:695.00px;font-size:11.00px;letter-spacing:-0.11px;font-weight:700;">345,63 kg</div>
<div class="t " style="right:102.6px;top:695.00px;font-size:11.00px;letter-spacing:0.14px;font-weight:700;">6.912,25</div>
<svg class="ic" style="left:1311.5px;top:690.5px;width:19px;height:19px" viewBox="0 0 24 24" ><path fill="#616161" d="M12 8c1.1 0 2-.9 2-2s-.9-2-2-2-2 .9-2 2 .9 2 2 2zm0 2c-1.1 0-2 .9-2 2s.9 2 2 2 2-.9 2-2-.9-2-2-2zm0 6c-1.1 0-2 .9-2 2s.9 2 2 2 2-.9 2-2-.9-2-2-2z"/></svg>
<div class="abs" style="left:430px;top:759px;width:911px;height:1px;background:#e0e0e0"></div>
<div class="t " style="left:450.8px;top:735.00px;font-size:11.00px;letter-spacing:0.45px;">22/07/25</div>
<div class="t " style="left:559.3px;top:725.00px;font-size:12.00px;letter-spacing:-0.19px;">01 - Safra</div>
<div class="t " style="left:559.3px;top:742.00px;font-size:12.00px;letter-spacing:0.14px;">Algodão 24/25</div>
<div class="t " style="left:676.7px;top:736.00px;font-size:10.29px;letter-spacing:-0.34px;">ALGODÃO KG</div>
<div class="t " style="left:771.3px;top:734.00px;font-size:12.00px;letter-spacing:-0.01px;">01 - Safra Algodão 24/25</div>
<div class="t " style="left:930.3px;top:734.00px;font-size:12.00px;letter-spacing:0.02px;">Distribuidor a lanço</div>
<div class="t " style="right:187.7px;top:735.00px;font-size:11.00px;letter-spacing:-0.01px;font-weight:700;">99.000,00 kg</div>
<div class="t " style="right:102.6px;top:735.00px;font-size:11.00px;letter-spacing:0.26px;font-weight:700;">0,00</div>
<div class="abs" style="left:430px;top:799px;width:911px;height:1px;background:#e0e0e0"></div>
<div class="t " style="left:450.8px;top:775.00px;font-size:11.00px;letter-spacing:0.45px;">10/07/25</div>
<div class="t " style="left:559.3px;top:765.00px;font-size:12.00px;letter-spacing:-0.19px;">01 - Safra</div>
<div class="t " style="left:559.3px;top:782.00px;font-size:12.00px;letter-spacing:0.14px;">Algodão 24/25</div>
<div class="t " style="left:676.7px;top:776.00px;font-size:10.29px;letter-spacing:-0.34px;">ALGODÃO KG</div>
<div class="t " style="left:771.3px;top:774.00px;font-size:12.00px;letter-spacing:-0.01px;">01 - Safra Algodão 24/25</div>
<div class="t " style="left:930.3px;top:774.00px;font-size:12.00px;letter-spacing:0.08px;">Amaggi</div>
<div class="t " style="right:187.7px;top:775.00px;font-size:11.00px;letter-spacing:-0.03px;font-weight:700;">2.199,78 kg</div>
<div class="t " style="right:102.6px;top:775.00px;font-size:11.00px;letter-spacing:0.26px;font-weight:700;">0,00</div>
<div class="abs" style="left:430px;top:839px;width:911px;height:1px;background:#e0e0e0"></div>
<div class="t " style="left:450.8px;top:815.00px;font-size:11.00px;letter-spacing:0.45px;">26/06/25</div>
<svg class="ic" style="left:517px;top:813px;width:17.400px;height:15px" viewBox="0 0 17.400 15"><path fill="#757575" d="M3.800 0.200 H10.600 V2.300 H8.400 V3.800 H13.400 C14.100 3.800 14.500 4.200 14.600 4.800 L15.700 10.700 H1.700 L2.800 4.800 C2.900 4.200 3.300 3.800 4 3.800 H6.200 V2.300 H3.800Z"/><path fill="#757575" d="M0.200 11.700 H17.200 V14.800 H0.200Z"/><path fill="#fff" d="M9.600 5.200 H13.300 V6.900 H9.600Z M3.900 5.200 H5.100 V6.400 H3.900Z M5.900 5.200 H7.100 V6.400 H5.900Z M7.900 5.200 H8.900 V6.400 H7.900Z M3.700 7.400 H4.900 V8.600 H3.700Z M5.900 7.400 H7.100 V8.600 H5.900Z M7.900 7.400 H8.900 V8.600 H7.900Z M4.700 0.900 H9.700 V1.600 H4.700Z" opacity=".8"/></svg>
<div class="t " style="left:559.3px;top:805.00px;font-size:12.00px;letter-spacing:-0.19px;">01 - Safra</div>
<div class="t " style="left:559.3px;top:822.00px;font-size:12.00px;letter-spacing:0.14px;">Algodão 24/25</div>
<div class="t " style="left:676.7px;top:809.00px;font-size:10.39px;letter-spacing:-0.36px;">ALGODÃO</div>
<div class="t " style="left:676.7px;top:822.00px;font-size:10.56px;letter-spacing:-0.36px;">UNIDADE</div>
<div class="t " style="left:771.3px;top:814.00px;font-size:12.00px;letter-spacing:-0.16px;">Silo Beta</div>
<div class="t " style="left:930.3px;top:814.00px;font-size:12.00px;letter-spacing:-0.03px;">Sem destino</div>
<div class="t " style="right:187.7px;top:815.00px;font-size:11.00px;letter-spacing:-0.01px;font-weight:700;">18.000,00 kg</div>
<div class="t " style="right:102.6px;top:815.00px;font-size:11.00px;letter-spacing:0.10px;font-weight:700;">1.256.445,51</div>
<svg class="ic" style="left:1311.5px;top:810.5px;width:19px;height:19px" viewBox="0 0 24 24" ><path fill="#616161" d="M12 8c1.1 0 2-.9 2-2s-.9-2-2-2-2 .9-2 2 .9 2 2 2zm0 2c-1.1 0-2 .9-2 2s.9 2 2 2 2-.9 2-2-.9-2-2-2zm0 6c-1.1 0-2 .9-2 2s.9 2 2 2 2-.9 2-2-.9-2-2-2z"/></svg>
<div class="abs" style="left:430px;top:879px;width:911px;height:1px;background:#e0e0e0"></div>
<div class="t " style="left:450.8px;top:855.00px;font-size:11.00px;letter-spacing:0.45px;">24/06/25</div>
<div class="t " style="left:559.3px;top:845.00px;font-size:12.00px;letter-spacing:-0.19px;">01 - Safra</div>
<div class="t " style="left:559.3px;top:862.00px;font-size:12.00px;letter-spacing:0.14px;">Algodão 24/25</div>
<div class="t " style="left:676.7px;top:849.00px;font-size:10.39px;letter-spacing:-0.36px;">ALGODÃO</div>
<div class="t " style="left:676.7px;top:862.00px;font-size:10.56px;letter-spacing:-0.36px;">UNIDADE</div>
<div class="t " style="left:771.3px;top:854.00px;font-size:12.00px;letter-spacing:-0.01px;">01 - Safra Algodão 24/25</div>
<div class="t " style="left:930.3px;top:854.00px;font-size:12.00px;letter-spacing:-0.16px;">Silo Beta</div>
<div class="t " style="right:187.7px;top:855.00px;font-size:11.00px;letter-spacing:-0.01px;font-weight:700;">18.000,00 kg</div>
<div class="t " style="right:102.6px;top:855.00px;font-size:11.00px;letter-spacing:0.26px;font-weight:700;">0,00</div>
<div class="fab" style="left:1315px;top:792.500px;width:47px;height:47px;z-index:3"></div>
<svg class="ic" style="left:1329.800px;top:809.800px;width:17px;height:12px;z-index:4" viewBox="0 0 17 12"><path fill="none" stroke="#fff" stroke-width="1.300" stroke-linejoin="round" d="M12 0.700 L16.600 3.300 V8.700 L12 11.300 L7.400 8.700 V3.300Z M7.400 3.300 L12 6 L16.600 3.300 M12 6 V11.300"/><path fill="none" stroke="#fff" stroke-width="1.500" d="M0.300 3.200H5.500 M2 6H5.500 M3.700 8.800H5.500"/></svg>
<div class="abs" style="left:1367px;top:120px;width:13px;height:738px;background:#fafafa"></div>
<svg class="ic" style="left:1370px;top:126px;width:13px;height:9px" viewBox="0 0 13 9"><path fill="#8a8a8a" d="M6.500 0.300 L12.700 8.700 H0.300Z"/></svg>
<div class="abs" style="left:1371px;top:143px;width:12px;height:384px;background:#8a8a8a;border-radius:5px"></div>
<svg class="ic" style="left:1370px;top:847.500px;width:13px;height:9px" viewBox="0 0 13 9"><path fill="#8a8a8a" d="M0.300 0.300 H12.700 L6.500 8.700Z"/></svg>
<div class="abs" style="left:0;top:856.500px;width:1380px;height:2px;background:#e6e6e6;z-index:9"></div>
<div id="top">
<div id="prog1" style="left:0;width:274px"></div><div id="prog2" style="left:1016px;width:364px"></div>
<svg class="ic" style="left:0;top:0;width:40px;height:30px" viewBox="0 0 40 30"><path fill="none" stroke="#fff" stroke-width="1.400" stroke-linejoin="round" d="M13.100 2.100 H22 C25 2.100 26.900 4.500 26.900 7.500 V22.700 L25.700 19.300 M13.100 2.100 C13.200 5 15.500 7.400 19.200 8.400"/><circle cx="19.200" cy="15.600" r="7.200" fill="none" stroke="#fff" stroke-width="1.400"/></svg>
<div class="abs" style="left:312px;top:0;width:163px;height:30px;background:#e6f7ed;border:1px solid #f6fcf8"></div>
<div class="t " style="left:317px;top:6.86px;font-size:18px;color:#00ba5e;letter-spacing:-0.32px;-webkit-text-stroke:0.2px #00ba5e">Fazenda Aegro</div>
<div class="abs" style="left:447px;top:1px;width:1px;height:26px;background:#00ba5e"></div>
<svg class="ic" style="left:446px;top:1px;width:28px;height:28px" viewBox="0 0 24 24" ><path fill="#00ba5e" d="M7 10l5 5 5-5z"/></svg>
<svg class="ic" style="left:486.5px;top:6px;width:18px;height:18px" viewBox="0 0 24 24" ><path fill="#fff" d="M10 6L8.59 7.41 13.17 12l-4.58 4.59L10 18l6-6z"/></svg>
<div class="abs" style="left:517px;top:0;width:242px;height:30px;border:1px solid #fff"></div>
<div class="t " style="left:521px;top:6.86px;font-size:18px;color:#fff;letter-spacing:-0.05px;-webkit-text-stroke:0.2px #fff">01 - Safra Algodão 24/25</div>
<div class="abs" style="left:732px;top:1px;width:1px;height:26px;background:#fff"></div>
<svg class="ic" style="left:731px;top:1px;width:28px;height:28px" viewBox="0 0 24 24" ><path fill="#fff" d="M7 10l5 5 5-5z"/></svg>
<svg class="ic" style="left:771.5px;top:6px;width:18px;height:18px" viewBox="0 0 24 24" ><path fill="#fff" d="M10 6L8.59 7.41 13.17 12l-4.58 4.59L10 18l6-6z"/></svg>
<div class="abs" style="left:801px;top:0;width:62px;height:30px;border:1px solid #fff"></div>
<div class="t " style="left:805.3px;top:6.86px;font-size:18px;color:#fff;-webkit-text-stroke:0.2px #fff">A</div>
<div class="abs" style="left:835px;top:1px;width:1px;height:26px;background:#fff"></div>
<svg class="ic" style="left:834px;top:1px;width:28px;height:28px" viewBox="0 0 24 24" ><path fill="#fff" d="M7 10l5 5 5-5z"/></svg>
<svg class="ic" style="left:1146px;top:6px;width:20px;height:19px" viewBox="0 0 20 19"><path fill="none" stroke="#fff" stroke-width="1.100" stroke-linejoin="round" d="M2 2 H8.500 C11 2 12.700 4 12.700 6.500 V16.900 L11.800 14.400 M2 2 C2.200 4.200 4 6.100 6.800 6.800 M14.300 4.500H18.500 M16.400 2.400V6.600"/><circle cx="6.800" cy="12.200" r="5.400" fill="none" stroke="#fff" stroke-width="1.100"/></svg>
<svg class="ic" style="left:1182px;top:6px;width:16px;height:16px" viewBox="0 0 16 16"><path fill="#fff" fill-rule="evenodd" d="M4.500 0.300 A4.200 4.200 0 0 1 8.500 5.800 L15.300 12.600 V15.500 H12 V13.700 H10.200 V11.900 H8.300 L6.300 8.300 A4.200 4.200 0 1 1 4.500 0.300Z M3.700 2.600 A1.100 1.100 0 1 0 3.700 4.800 A1.100 1.100 0 1 0 3.700 2.600Z"/></svg>
<svg class="ic" style="left:1214px;top:6.500px;width:12px;height:16px" viewBox="0 0 12 16"><path fill="#fff" d="M6 0.400 A5.400 5.400 0 0 1 9 10.300 V11.300 H3 V10.300 A5.400 5.400 0 0 1 6 0.400Z M3.200 12 H8.800 V12.900 H3.200Z M3.800 13.500 H8.200 L6.600 15.200 H5.400Z"/></svg>
<svg class="ic" style="left:1224px;top:5px;width:9px;height:9px" viewBox="0 0 9 9"><path fill="#fff" d="M3.300 0.600 L3.900 2.100 L5.400 2.700 L3.900 3.300 L3.300 4.800 L2.700 3.300 L1.200 2.700 L2.700 2.100Z M5.400 4.900 L5.850 6 L7 6.450 L5.850 6.900 L5.400 8 L4.950 6.900 L3.800 6.450 L4.950 6Z"/></svg>
<svg class="ic" style="left:1247.05px;top:5.95px;width:17.5px;height:17.5px" viewBox="0 0 24 24" ><path fill="#fff" d="M19,2L14,6.5V17.5L19,13V2M6.5,5C4.55,5 2.45,5.4 1,6.5V21.160C1,21.410 1.250,21.660 1.500,21.660C1.600,21.660 1.650,21.590 1.750,21.590C3.100,20.940 5.050,20.500 6.500,20.500C8.450,20.500 10.550,20.900 12,22C13.350,21.150 15.800,20.500 17.500,20.500C19.150,20.500 20.850,20.810 22.250,21.560C22.350,21.610 22.400,21.590 22.500,21.590C22.750,21.590 23,21.340 23,21.090V6.500C22.400,6.050 21.750,5.750 21,5.500V7.500L21,13V19C19.900,18.650 18.700,18.500 17.500,18.500C15.800,18.500 13.350,19.150 12,20V13L12,8.500V6.500C10.550,5.400 8.450,5 6.500,5V5Z"/></svg>
<svg class="ic" style="left:1282px;top:7.2px;width:16px;height:16px" viewBox="0 0 24 24" ><path fill="#fff" d="M12 2C6.48 2 2 6.48 2 12s4.48 10 10 10 10-4.48 10-10S17.52 2 12 2zm1 17h-2v-2h2v2zm2.07-7.750l-.9.920C13.450 12.9 13 13.5 13 15h-2v-.5c0-1.1.45-2.1 1.170-2.830l1.240-1.260c.37-.36.59-.86.59-1.410 0-1.1-.9-2-2-2s-2 .9-2 2H8c0-2.210 1.790-4 4-4s4 1.790 4 4c0 .88-.36 1.680-.93 2.250z"/></svg>
<svg class="ic" style="left:1312.5px;top:4px;width:20px;height:20px" viewBox="0 0 24 24" ><path fill="#fff" d="M20 18.69L7.84 6.14 5.27 3.49 4 4.76l2.8 2.8v.01c-.52.99-.8 2.16-.8 3.42v5l-2 2v1h13.730l2 2L21 19.720l-1-1.030zM12 22c1.110 0 2-.89 2-2h-4c0 1.110.89 2 2 2zm6-7.320V11c0-3.080-1.640-5.640-4.500-6.320V4c0-.83-.67-1.500-1.500-1.500s-1.500.67-1.500 1.500v.68c-.15.030-.29.080-.42.120-.1.030-.2.070-.3.110h-.01c-.01 0-.01 0-.02.010-.23.090-.46.2-.68.310 0 0-.01 0-.01.010L18 14.680z"/></svg>
<div class="abs" style="left:1346px;top:-1px;width:33px;height:33px;border-radius:50%;background:#fff;box-shadow:0 1px 3px rgba(0,0,0,.2)"></div>
<div class="t" style="left:1346px;width:33px;text-align:center;top:5.500px;font-size:18px;font-weight:700;color:#00ba5e">H</div>
</div>
</body>
</html>
